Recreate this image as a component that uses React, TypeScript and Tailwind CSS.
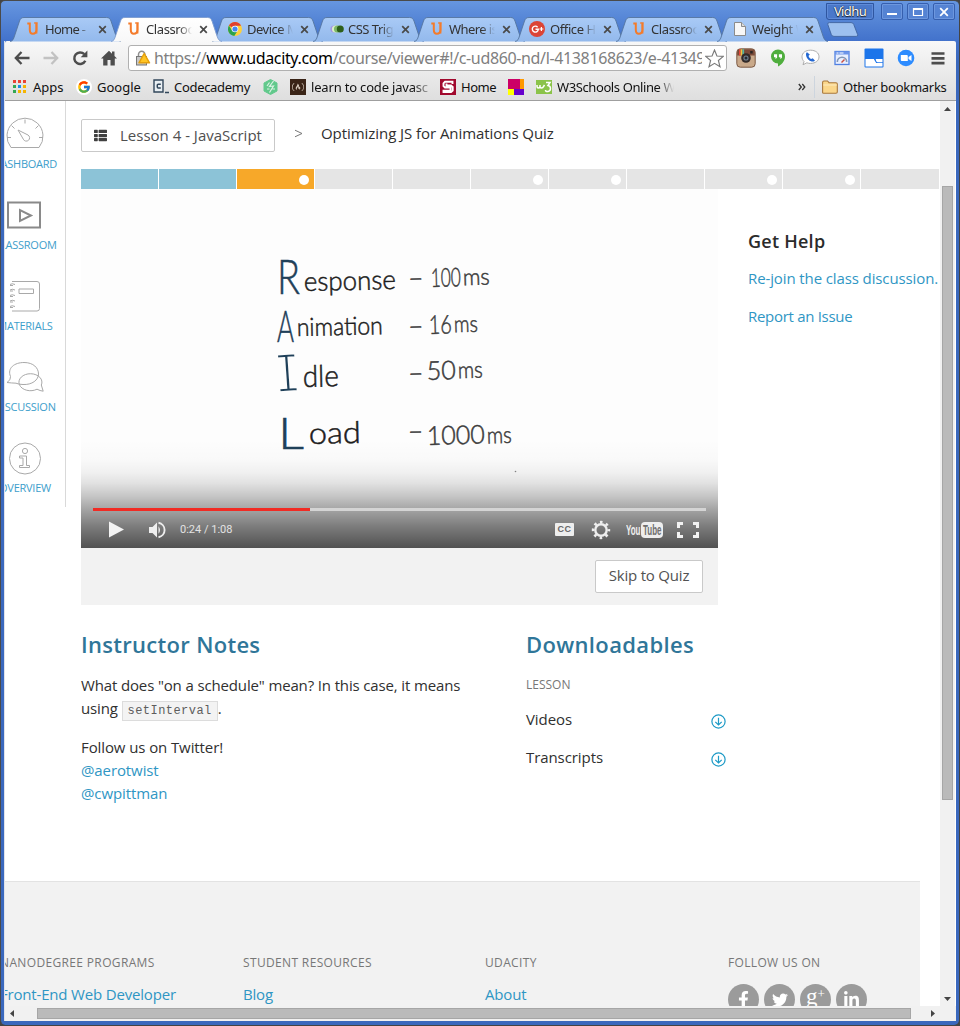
import type { ReactNode } from "react";
import { FaFacebookF, FaTwitter, FaLinkedinIn, FaThList, FaFreeCodeCamp } from "react-icons/fa";
import { FcGoogle } from "react-icons/fc";

const UI = "font-['Noto_Sans',sans-serif]";

function UdacityIcon() {
  return (
    <svg width="12" height="14" viewBox="0 0 12 14" fill="none" stroke="#f47b2a" strokeWidth="2">
      <path d="M.3 1.600h2.500v6.100c0 2.700 1.200 4 3 4s3.600-1.200 3.600-4V1.500" />
      <path d="M7.200 1h3.500M9.600 1.500v10" strokeWidth="1.600" />
    </svg>
  );
}

function ChromeIcon() {
  return (
    <svg width="14" height="14" viewBox="0 0 14 14">
      <circle cx="7" cy="7" r="7" fill="#fdd03b" />
      <path d="M7 7 .9 3.600A7 7 0 0 1 13.100 3.700H7Z" fill="#e0402f" />
      <path d="M.95 3.500A7 7 0 0 0 6.300 14L9.500 8.700 7 7 4 8.500Z" fill="#2ba24c" />
      <circle cx="7" cy="7" r="3.300" fill="#fff" />
      <circle cx="7" cy="7" r="2.600" fill="#4487f2" />
    </svg>
  );
}

function TriggersIcon() {
  return (
    <svg width="14" height="8" viewBox="0 0 14 8">
      <circle cx="4" cy="4" r="3.600" fill="#a793e2" />
      <circle cx="5.500" cy="4" r="3.600" fill="#d6f0c8" />
      <circle cx="7.500" cy="4" r="3.500" fill="#7db668" />
      <circle cx="10.300" cy="4" r="3.500" fill="#2d5f1a" />
    </svg>
  );
}

function GPlusIcon() {
  return (
    <svg width="16" height="16" viewBox="0 0 16 16">
      <circle cx="8" cy="8" r="8" fill="#dc4436" />
      <path d="M8.600 6.200A3 3 0 1 0 9.300 8.300H6.500" fill="none" stroke="#fff" strokeWidth="1.400" />
      <path d="M12.400 6v4M10.400 8h4" stroke="#fff" strokeWidth="1.200" />
    </svg>
  );
}

function PageIcon() {
  return (
    <svg width="12" height="14" viewBox="0 0 12 14">
      <path d="M.5.5H7.500L11.500 4.500V13.500H.5Z" fill="#f7f7f7" stroke="#8b8b8b" />
      <path d="M7.500.5V4.500H11.500" fill="#ddd" stroke="#8b8b8b" />
    </svg>
  );
}

const tabs: { title: string; icon: ReactNode; shift: string; track: string; active?: boolean }[] = [
  { title: "Home -", icon: <UdacityIcon />, shift: "", track: "tracking-[-0.7px]" },
  { title: "Classroom", icon: <UdacityIcon />, shift: "", track: "tracking-[-0.4px]", active: true },
  { title: "Device Mode", icon: <ChromeIcon />, shift: "-ml-px", track: "tracking-[-0.5px]" },
  { title: "CSS Triggers", icon: <TriggersIcon />, shift: "", track: "tracking-[-0.5px]" },
  { title: "Where is", icon: <UdacityIcon />, shift: "", track: "tracking-[-0.6px]" },
  { title: "Office Hours", icon: <GPlusIcon />, shift: "-ml-[3px]", track: "tracking-[-0.4px]" },
  { title: "Classroom", icon: <UdacityIcon />, shift: "", track: "tracking-[-0.4px]" },
  { title: "Weight Watch", icon: <PageIcon />, shift: "", track: "tracking-[-0.4px]" },
];

function TabShape({ active }: { active?: boolean }) {
  return (
    <svg className="absolute left-0 top-0" width="112" height="25" viewBox="0 0 112 25">
      <defs>
        <linearGradient id="tabBlue" x1="0" y1="0" x2="0" y2="1">
          <stop offset="0" stopColor="#a9caf6" />
          <stop offset="1" stopColor="#93b9ec" />
        </linearGradient>
        <linearGradient id="tabWhite" x1="0" y1="0" x2="0" y2="1">
          <stop offset="0" stopColor="#ffffff" />
          <stop offset="1" stopColor="#f8f8f8" />
        </linearGradient>
      </defs>
      <path
        d="M0 24.500C3 24 3.500 22 4.500 19L9.500 4C10.500 1.500 11.500.5 14 .5H96.500C99 .5 100 1.500 101 4L106 19C107 22 108 24 111 24.500"
        fill={active ? "url(#tabWhite)" : "url(#tabBlue)"}
        stroke={active ? "#7d9ccf" : "#55759f"}
        strokeWidth="0.900"
      />
    </svg>
  );
}

function TabStrip() {
  return (
    <div className="flex h-[24px] pl-[5px]">
      {tabs.map((t, i) => (
        <div key={i} className={t.active ? "relative z-10 h-[25px] w-[101px]" : "relative h-[24px] w-[101px]"}>
          <TabShape active={t.active} />
          <div className="relative flex h-[24px] items-center pl-[17px]">
            <div className={"flex w-[18px] shrink-0 items-center " + t.shift}>{t.icon}</div>
            <div
              className={
                "w-[46px] shrink-0 overflow-hidden whitespace-nowrap text-[13px] leading-[20px] text-[#333] [mask-image:linear-gradient(to_right,#000_72%,transparent_100%)] " +
                t.track + (t.shift === "-ml-[3px]" ? " ml-[3px]" : t.shift ? " ml-px" : "")
              }
            >
              {t.title}
            </div>
            <svg className="ml-[7px] shrink-0" width="9" height="9" viewBox="0 0 9 9" stroke="#4a4a4a" strokeWidth="1.700">
              <path d="M1.200 1.200 7.800 7.800M7.800 1.200 1.200 7.800" />
            </svg>
          </div>
        </div>
      ))}
      <svg className="ml-[9px] mt-[5px]" width="32" height="16" viewBox="0 0 32 16">
        <path d="M.8 2.500Q.3.600 2.300.600H24Q26 .6 26.700 2.300L30.600 12.500Q31.200 14.400 29.200 14.400H7Q5 14.400 4.300 12.500Z" fill="#9dc0ef" stroke="#40639e" strokeWidth="0.900" />
      </svg>
    </div>
  );
}

function WinButton({ children }: { children: ReactNode }) {
  return (
    <div className="flex h-[17px] w-[22px] items-center justify-center rounded-[2px] border border-[#365fae] bg-[#5583d3] shadow-[inset_0_0_0_1px_#6d97de]">
      {children}
    </div>
  );
}

function WindowControls() {
  return (
    <div className="absolute right-[4px] top-[2px] z-20 flex">
      <div className="mr-[7px] flex h-[17px] w-[48px] items-center justify-center rounded-b-[3px] border border-[#2f56a0] bg-[#4a78ca] text-[13px] leading-[15px] tracking-[-0.6px] text-white shadow-[inset_0_0_0_1px_#5f8bd8] [text-shadow:0_0_1px_#000,0_1px_1px_#222]">
        Vidhu
      </div>
      <div className="flex gap-[4px]">
        <WinButton>
          <svg width="12" height="10" viewBox="0 0 12 10"><path d="M1 7h10" stroke="#fff" strokeWidth="2" /></svg>
        </WinButton>
        <WinButton>
          <svg width="12" height="10" viewBox="0 0 12 10"><path d="M1.500 1.500h9v7h-9zM1.500 2.500h9" stroke="#fff" fill="none" strokeWidth="1.200" /></svg>
        </WinButton>
        <WinButton>
          <svg width="10" height="10" viewBox="0 0 10 10"><path d="M1.200 1.200 8.800 8.800M8.800 1.200 1.200 8.800" stroke="#fff" strokeWidth="1.800" /></svg>
        </WinButton>
      </div>
    </div>
  );
}

function Toolbar() {
  return (
    <div className="flex h-[34px] items-center pl-[9px]">
      <svg width="16" height="14" viewBox="0 0 16 14" fill="none" stroke="#4d4d4d" strokeWidth="2.300"><path d="M7.500 1 1.800 7l5.700 6M1.800 7H15.500" /></svg>
      <svg className="ml-[13px]" width="16" height="14" viewBox="0 0 16 14" fill="none" stroke="#c2c2c2" strokeWidth="2.300"><path d="M8.500 1 14.200 7l-5.700 6M14.200 7H.5" /></svg>
      <svg className="ml-[13px]" width="16" height="16" viewBox="0 0 16 16"><path d="M12.300 4.200A5.800 5.800 0 1 0 13.300 10.800" fill="none" stroke="#4d4d4d" strokeWidth="2.500" /><path d="M15.400.5V7.200H8.700Z" fill="#4d4d4d" /></svg>
      <svg className="ml-[13px]" width="16" height="16" viewBox="0 0 16 16" fill="#4d4d4d"><path d="M8 .8 0 8.600H2.200V15.400H6.500V10H9.500V15.400H13.800V8.600H16L13.500 6.100V1.500H11V3.700Z" /></svg>
      <div className="ml-[11px] flex h-[26px] w-[599px] items-center rounded-[3px] border border-[#b0b0b0] bg-white pl-[6px]">
        <svg width="16" height="16" viewBox="0 0 16 16">
          <path d="M3.500 7V4.500a3.200 3.200 0 0 1 6.400 0V7" fill="none" stroke="#8f8f8f" strokeWidth="1.500" />
          <rect x="1.500" y="6.500" width="10" height="8.500" fill="#c8c8c8" stroke="#777" />
          <path d="M9.200 3.500 14.500 12.800H4Z" fill="#ffc524" stroke="#e5a00c" strokeLinejoin="round" strokeWidth="1.500" />
        </svg>
        <div className="ml-[3px] w-[548px] overflow-hidden whitespace-nowrap text-[16px] leading-[24px] tracking-[-0.36px] text-[#808080]">
          https://<span className="text-black">www.udacity.com</span>/course/viewer#!/c-ud860-nd/l-4138168623/e-41349
        </div>
        <svg className="ml-[3px]" width="19" height="19" viewBox="0 0 18 18" fill="#fff" stroke="#7b7b7b" strokeWidth="1.100"><path d="m9 1 2.300 5.600 6 .4-4.600 3.900 1.500 5.900L9 13.600l-5.200 3.200 1.500-5.900L.7 7l6-.4Z" /></svg>
      </div>
      <div className="ml-[9px] flex gap-[12px]">
        <svg width="20" height="20" viewBox="0 0 20 20">
          <rect x=".8" y=".8" width="18.400" height="18.400" rx="3.500" fill="#c9a98a" stroke="#7c5a45" />
          <path d="M1.200 7.500V4.300Q1.200 1.200 4.300 1.200H15.700Q18.800 1.200 18.800 4.300V7.500Z" fill="#7b4a38" />
          <path d="M3 1.300h1.700v6.200H3z" fill="#e3493c" /><path d="M4.700 1.200h1.700v6.300H4.700z" fill="#f3c23c" /><path d="M6.400 1.200h1.700v6.300H6.400z" fill="#58b7a0" />
          <circle cx="10" cy="10" r="4.800" fill="#322a28" /><circle cx="10" cy="10" r="2.600" fill="#70808f" /><circle cx="10" cy="10" r="1.500" fill="#252b33" />
          <rect x="14.200" y="3" width="2.500" height="2.500" fill="#2b2523" />
        </svg>
        <svg width="20" height="20" viewBox="0 0 20 20">
          <path d="M10 1.500a7 7 0 0 1 7 7c0 4.500-3.200 8-7 10V15.500a7 7 0 0 1 0-14Z" fill="#4fae3d" />
          <path d="M6 6.300h3.100V9.500L7.500 11.300V9.200H6zM10.900 6.300H14V9.500l-1.600 1.800V9.200h-1.500z" fill="#fff" />
        </svg>
        <svg width="20" height="20" viewBox="0 0 20 20">
          <path d="M10.500 2.200c5 0 8.500 2.700 8.500 6.600s-3.500 6.600-8.500 6.600c-1.300 0-2.600-.2-3.700-.6L3 16.800l1-3.400C2.700 12.200 2 10.600 2 8.800c0-3.900 3.500-6.600 8.500-6.600Z" fill="#fff" stroke="#adadad" />
          <path d="M7 4.200c-1.800.8-1 5 1.200 7.200s5.800 2.800 6.700 1l-2.200-2.200-1.500.8c-1.300-.3-2.600-2-2.600-3.300L9.800 6.500Z" fill="#2468d2" />
        </svg>
        <svg width="20" height="20" viewBox="0 0 20 20">
          <rect x="3" y="3.500" width="14" height="13" fill="#e8efff" stroke="#5080e2" strokeWidth="1.300" />
          <path d="M3 3.500h14v3H3z" fill="#6d95e9" /><path d="M4.500 5h2M7.500 5h4" stroke="#fff" />
          <path d="M5.300 14a4.700 4.700 0 0 1 9.400 0" fill="none" stroke="#8396b5" strokeWidth="1.600" />
          <path d="m9.500 14.500 3-3" stroke="#cc4d40" strokeWidth="1.400" />
        </svg>
        <svg width="20" height="20" viewBox="0 0 20 20">
          <rect x=".5" y=".5" width="19" height="19" rx="1" fill="#1c75ea" />
          <path d="M1.500 11h8.300l2.400 4h6.300v3.500h-17z" fill="#fff" /><path d="M11.700 11h6.800v3.300h-4.800q-1.500 0-2-3.300Z" fill="#fff" />
        </svg>
        <svg width="20" height="20" viewBox="0 0 20 20">
          <circle cx="10" cy="10" r="8.300" fill="#2d8cff" />
          <path d="M4.800 7h6q1 0 1 1v5h-6q-1 0-1-1ZM12.500 9l3-2v6l-3-2Z" fill="#fff" />
        </svg>
        <svg width="20" height="20" viewBox="0 0 20 20" stroke="#4d4d4d" strokeWidth="2.700"><path d="M3.500 5.500h13M3.500 10.300h13M3.500 15.100h13" /></svg>
      </div>
    </div>
  );
}

const appColors = [
  "bg-[#ea4335]", "bg-[#ea4335]", "bg-[#ea4335]",
  "bg-[#34a853]", "bg-[#1a8fe8]", "bg-[#f5b400]",
  "bg-[#34a853]", "bg-[#f5b400]", "bg-[#f5b400]",
];

function Bookmarks() {
  return (
    <div className="flex h-[26px] items-center border-b border-[#9f9f9f] pb-[2px] pl-[8px] text-[13px] leading-[20px] whitespace-nowrap text-[#111]">
      <div className="grid w-[13px] grid-cols-3 gap-[2px]">
        {appColors.map((c, i) => <div key={i} className={"size-[3px] " + c} />)}
      </div>
      <div className="ml-[7px] w-[43px]">Apps</div>
      <div className="flex size-[16px] items-center justify-center rounded-full bg-white"><FcGoogle size={14} /></div>
      <div className="ml-[5px] w-[56px]">Google</div>
      <svg width="16" height="15" viewBox="0 0 16 15" fill="none" stroke="#32475b">
        <path d="M1 1h9v12H1z" strokeWidth="1.400" fill="#e9eff3" /><path d="M7.800 5.200H5.200q-.9 0-.9.900v2q0 .9.900.9H7.800" strokeWidth="1.500" /><path d="M12 13.500h4" strokeWidth="1.300" />
      </svg>
      <div className="ml-[5px] w-[89px] tracking-[-0.31px]">Codecademy</div>
      <svg width="15" height="16" viewBox="0 0 15 16"><path d="M7.500.5 14 4v8l-6.500 3.500L1 12V4Z" fill="#62c98c" stroke="#62c98c" strokeLinejoin="round" /><path d="m10.500 2-4 5.500 4-.5-4 6.500M6.500 3.500 4 7M9.500 10h2.500M4 10h2.500" stroke="#dcf2e4" strokeWidth="1.200" fill="none" /></svg>
      <div className="ml-[12px] flex size-[16px] items-center justify-center bg-[#3a2417] text-[#d9cdbf]"><FaFreeCodeCamp size={12} /></div>
      <div className="ml-[5px] w-[129px] tracking-[-0.18px]">
        <div className="w-[118px] overflow-hidden [mask-image:linear-gradient(to_right,#000_86%,#0004)]">learn to code javascript</div>
      </div>
      <svg width="16" height="16" viewBox="0 0 16 16"><rect width="16" height="16" fill="#a1092e" /><path d="M12.500 5V2.800H5L3.500 4.300V7L5 8.500h5.500v3.300H3.500V13H11l1.700-1.500V8L11 6.500H6.500V4.500" fill="none" stroke="#fff" strokeWidth="1.900" /></svg>
      <div className="ml-[5px] w-[47px] tracking-[-0.45px]">Home</div>
      <svg width="16" height="16" viewBox="0 0 16 16" shapeRendering="crispEdges"><path d="M0 0h12v10H0z" fill="#cc0066" /><path d="M12 0h4v10h-4z" fill="#ff9900" /><path d="M0 10h6v6H0z" fill="#ffff00" /><path d="M6 10h10v6H6z" fill="#6600cc" /></svg>
      <div className="ml-[12px] flex h-[14px] w-[16px] items-center justify-center bg-[#8bc34a]">
        <svg width="16" height="14" viewBox="0 0 16 14" fill="none" stroke="#fff" strokeWidth="1.500"><path d="M1 5v1.500q0 1.500 1.300 1.500T4 6.500V5M4 6.500Q4 8 5.500 8T7.500 6.500L8.500 5M10 2.500h4L12 5.500q2.500.3 2.500 3T12 11.500t-2.500-1.500" /></svg>
      </div>
      <div className="ml-[5px] w-[241px] tracking-[-0.4px]">
        <div className="w-[117px] overflow-hidden [mask-image:linear-gradient(to_right,#000_86%,transparent)]">W3Schools Online Web</div>
      </div>
      <svg width="8" height="8" viewBox="0 0 8 8" fill="none" stroke="#333" strokeWidth="1.300"><path d="m.8 1 2.500 3L.8 7M4.300 1l2.500 3-2.500 3" /></svg>
      <div className="ml-[8px] h-[22px] w-px bg-[#cdd5de]" />
      <svg className="ml-[7px]" width="16" height="14" viewBox="0 0 16 14"><path d="M.6 12.500V2.400Q.6 1 2 1H5.500L7 2.700H14Q15.300 2.700 15.300 4V12Q15.300 13.200 14 13.200H1.500Q.6 13.200.6 12.500Z" fill="#fbd78b" stroke="#a9783c" strokeWidth="1.100" /><path d="M1.200 5h13.600" stroke="#fdebc0" /></svg>
      <div className="ml-[5px] tracking-[-0.27px]">Other bookmarks</div>
    </div>
  );
}

const sideItems: { label: string; icon: ReactNode }[] = [
  {
    label: "DASHBOARD",
    icon: <path d="M6 31.500A18 18 0 1 1 34 31.500ZM20 3.500v4M6.500 9.500l3 3M33.500 9.500l-3 3M2 21.500h4M34 21.500h4M13 14l10 5a3.300 3.300 0 1 1-4.700 4.200Z" />,
  },
  { label: "CLASSROOM", icon: <path d="M3 5.500h32v25H3zM15 13v11l11-5.500Z" stroke="#8a8a8a" strokeWidth="2" /> },
  {
    label: "MATERIALS",
    icon: <path d="M7 3.500H32Q34.500 3.500 34.500 6V30.500Q34.500 33 32 33H7M14 11h14.500v4.500H14ZM5 6.500q2-1.500 5 0M5 12q2-1.500 5 0M5 17.500q2-1.500 5 0M5 23q2-1.500 5 0M5 28.500q2-1.500 5 0M5 7.500h3M5 13h3M5 18.500h3M5 24h3M5 29.500h3" />,
  },
  {
    label: "DISCUSSION",
    icon: <><path d="M5.500 17.500C2 9 9.500 3.500 19 3.500S33.500 9 33.500 15 27 26 18 25.500Q14 25.500 11 24.200 6.500 24 2 23.500 6 21 5.500 17.500Z" /><path d="M32 30.200A11.500 8.500 0 1 1 36.300 26L38.200 32.200Q35 31.800 32 30.200Z" /></>,
  },
  { label: "OVERVIEW", icon: <><circle cx="20" cy="18.500" r="15.500" /><circle cx="20" cy="11" r="2.600" /><path d="M14.500 16H21.500V25.500H24.500V27.500H14.500V25.500H18V18H14.500Z" /></> },
];

function Sidebar() {
  return (
    <div className="h-[406px] w-[61px] overflow-hidden border-r border-[#d9d9d9] pt-[15px]">
      {sideItems.map((s) => (
        <div key={s.label} className="-ml-[21px] flex h-[81px] w-[82px] flex-col items-center">
          <svg width="40" height="38" viewBox="0 0 40 38" fill="none" stroke="#a9a9a9" strokeWidth="1">{s.icon}</svg>
          <div className="mt-[3px] text-[11px] leading-[14px] tracking-[-0.26px] text-[#3d9ecb]">{s.label}</div>
        </div>
      ))}
    </div>
  );
}

const segments = ["done", "done", "current", "todo", "todo", "dot", "dot", "todo", "dot", "dot", "todo"];
const segmentColor: Record<string, string> = {
  done: "bg-[#8cc3d7]",
  current: "bg-[#f7a829]",
  todo: "bg-[#e5e5e5]",
  dot: "bg-[#e5e5e5]",
};

const rows = [
  { cap: "R", cx: 277, cy: 294, cs: 48, cw: 23, rest: "esponse", rx: 304, ry: 291, rs: 27, rw: 92, dy: 282, num: "100", nx: 431, ny: 287, nw: 30, mx: 463, my: 286, mw: 27 },
  { cap: "A", cx: 277, cy: 342, cs: 44, cw: 17, rest: "nimation", rx: 297, ry: 336, rs: 25, rw: 86, dy: 330, num: "16", nx: 429, ny: 334, nw: 23, mx: 454, my: 333, mw: 24 },
  { cap: "I", cx: 274, cy: 392, cs: 58, cw: 27, rest: "dle", rx: 303, ry: 387, rs: 30, rw: 36, dy: 377, num: "50", nx: 427, ny: 380, nw: 29, mx: 458, my: 379, mw: 25 },
  { cap: "L", cx: 278, cy: 449, cs: 43, cw: 26, rest: "oad", rx: 309, ry: 444, rs: 30, rw: 52, dy: 435, num: "1000", nx: 427, ny: 445, nw: 58, mx: 487, my: 445, mw: 25 },
];

function Slide() {
  return (
    <svg className="absolute left-0 top-0 font-['Lato',sans-serif]" width="637" height="359" viewBox="81 189 637 359">
      {rows.map((r) => (
        <g key={r.cap}>
          {r.cap === "I" ? (
            <text x={r.cx} y={r.cy} fontSize={r.cs} textLength={r.cw} lengthAdjust="spacingAndGlyphs" fill="#1f4059" stroke="#fdfdfd" strokeWidth="2.400" transform="rotate(-4 287 374)" className="font-['Liberation_Mono',monospace]">{r.cap}</text>
          ) : (
            <text x={r.cx} y={r.cy} fontSize={r.cs} textLength={r.cw} lengthAdjust="spacingAndGlyphs" fill="#1f4059" stroke="#1f4059" strokeWidth="0.500" fontWeight="300">{r.cap}</text>
          )}
          <text x={r.rx} y={r.ry} fontSize={r.rs} textLength={r.rw} lengthAdjust="spacingAndGlyphs" fill="#1c1c1c" stroke="#1c1c1c" strokeWidth="0.500" fontWeight="300" transform={`rotate(-1.200 ${r.rx} ${r.ry})`}>{r.rest}</text>
          <g transform={`rotate(-1.500 ${r.nx} ${r.ny})`} fill="#3c3c3c" stroke="#3c3c3c" strokeWidth="0.500" fontWeight="300">
            <text x="408" y={r.dy + 4} fontSize="24" textLength="16" lengthAdjust="spacingAndGlyphs">-</text>
            <text x={r.nx} y={r.ny} fontSize="26" textLength={r.nw} lengthAdjust="spacingAndGlyphs">{r.num}</text>
            <text x={r.mx} y={r.my} fontSize="23" textLength={r.mw} lengthAdjust="spacingAndGlyphs">ms</text>
          </g>
        </g>
      ))}
      <circle cx="515.500" cy="471.500" r=".8" fill="#888" />
    </svg>
  );
}

function Video() {
  return (
    <div className="relative flex h-[359px] w-[637px] flex-col justify-end bg-[#fdfdfd]">
      <Slide />
      <div className="relative h-[108px] bg-[linear-gradient(to_bottom,rgba(0,0,0,0)_0%,rgba(0,0,0,0.015)_18%,rgba(0,0,0,0.05)_30%,rgba(0,0,0,0.11)_40%,rgba(0,0,0,0.22)_52%,rgba(0,0,0,0.35)_64%,rgba(0,0,0,0.51)_80%,rgba(0,0,0,0.68)_100%)] px-[12px] pt-[68px]">
        <div className="h-[3px] bg-[#d4d4d4]"><div className="h-[3px] w-[217px] bg-[#f12b24]" /></div>
        <div className="flex h-[37px] items-center">
          <svg className="ml-[15px]" width="17" height="17" viewBox="0 0 17 17"><path d="M1 .5 16 8.500 1 16.500Z" fill="#f3f3f3" /></svg>
          <svg className="ml-[23px]" width="18" height="18" viewBox="0 0 18 18"><path d="M1 6h3.500L9 1.500v15L4.500 12H1Z" fill="#eee" /><path d="M10.500 5.200q3 3.800 0 7.600Z" fill="#eee" /><path d="M10.500 1.800a7.300 7.300 0 0 1 0 14.400" fill="none" stroke="#eee" strokeWidth="1.900" /></svg>
          <div className="ml-[14px] w-[376px] font-['Roboto',sans-serif] text-[11px] leading-[14px] text-[#e3e3e3]">0:24 / 1:08</div>
          <div className="-ml-px flex h-[13px] w-[19px] items-center justify-center rounded-[1px] bg-[#eee] font-['Liberation_Sans',sans-serif] text-[9px] leading-[13px] font-bold tracking-[0.5px] text-[#666]">CC</div>
          <svg className="ml-[17px]" width="20" height="20" viewBox="0 0 20 20" fill="none" stroke="#eee"><circle cx="10" cy="10" r="5.700" strokeWidth="2.400" /><circle cx="10" cy="10" r="7.900" strokeWidth="2.600" strokeDasharray="2.600 3.605" strokeDashoffset="1.300" /></svg>
          <div className="ml-[15px] flex h-[18px] w-[38px] items-center">
            <svg width="38" height="18" viewBox="0 0 38 18" className="font-['Liberation_Sans',sans-serif]">
              <text x="0" y="14" fontSize="14" fontWeight="700" textLength="14.500" lengthAdjust="spacingAndGlyphs" fill="#eee">You</text>
              <rect x="15" y="1" width="22" height="16" rx="4" fill="#eee" />
              <text x="17" y="14" fontSize="14" fontWeight="700" textLength="18.500" lengthAdjust="spacingAndGlyphs" fill="#6f6f6f">Tube</text>
            </svg>
          </div>
          <svg className="ml-[12px]" width="24" height="18" viewBox="0 0 24 18" fill="none" stroke="#f2f2f2" strokeWidth="3"><path d="M2.500 7V2.500H7M17 2.500h4.500V7M21.500 11v4.500H17M7 15.500H2.500V11" /></svg>
        </div>
      </div>
    </div>
  );
}

function DownloadRow({ label }: { label: string }) {
  return (
    <div className="flex h-[38px] w-[200px] items-center justify-between text-[15px] tracking-[-0.08px] text-[#303030]">
      <span>{label}</span>
      <svg className="mt-[4px]" width="15" height="15" viewBox="0 0 15 15" fill="none" stroke="#1d9ac6" strokeWidth="1.200"><circle cx="7.500" cy="7.500" r="6.600" /><path d="M7.500 3.800v7M4.300 7.800l3.200 3.200 3.200-3.200" /></svg>
    </div>
  );
}

const link = "text-[#2f96c4]";

function Main() {
  return (
    <div className="w-[859px] pt-[18px]">
      <div className="flex h-[33px] items-center">
        <div className="flex h-[33px] w-[194px] items-center rounded-[2px] border border-[#c9c9c9] pb-px pl-[12px] text-[15px] whitespace-nowrap text-[#4f4f4f]">
          <FaThList className="mt-px text-[#404040]" size={13} />
          <span className="ml-[13px]">Lesson 4 - JavaScript</span>
        </div>
        <svg className="ml-[19px] mt-[-5px]" width="9" height="9" viewBox="0 0 9 9" fill="none" stroke="#777"><path d="M1 1.200 8 4.500 1 7.800" /></svg>
        <div className="-mt-[5px] ml-[18px] text-[15px] tracking-[-0.06px] text-[#303030]">Optimizing JS for Animations Quiz</div>
      </div>
      <div className="mt-[17px] flex h-[20px] gap-px">
        {segments.map((s, i) => (
          <div key={i} className={"flex h-[20px] shrink-0 items-center justify-end pt-[2px] pr-[5px] " + (i === 10 ? "w-[78px] " : "w-[77px] ") + segmentColor[s]}>
            {(s === "dot" || s === "current") && <div className="size-[10px] rounded-full bg-white" />}
          </div>
        ))}
      </div>
      <div className="flex">
        <div className="w-[637px]">
          <Video />
          <div className="flex h-[57px] justify-end bg-[#f2f2f2] pt-[12px] pr-[15px]">
            <div className="flex h-[33px] w-[108px] items-center justify-center rounded-[2px] border border-[#c9c9c9] bg-white pb-[2px] text-[15px] tracking-[-0.2px] text-[#525252]">Skip to Quiz</div>
          </div>
        </div>
        <div className="ml-[30px] pt-[40px] text-[15px] leading-[22px] whitespace-nowrap">
          <h3 className="text-[18px] leading-[24px] font-semibold tracking-[0.25px] text-[#2b2b2b]">Get Help</h3>
          <div className={"mt-[14px] tracking-[-0.11px] " + link}>Re-join the class discussion.</div>
          <div className={"mt-[16px] tracking-[-0.3px] " + link}>Report an Issue</div>
        </div>
      </div>
      <div className="flex pt-[23px]">
        <div className="w-[445px]">
          <h2 className="text-[22px] leading-[32px] font-semibold tracking-[0.3px] text-[#2f7699]">Instructor Notes</h2>
          <p className="mt-[14px] text-[15px] leading-[23px] tracking-[-0.14px] text-[#303030]">
            What does "on a schedule" mean? In this case, it means<br />
            using <code className="border border-[#dcdcdc] bg-[#f3f3f3] px-[5px] py-[2px] font-['Liberation_Mono',monospace] text-[12px] tracking-[0.45px] text-[#5d5d5d]">setInterval</code>.
          </p>
          <p className="mt-[13px] text-[15px] leading-[23px] tracking-[-0.1px] text-[#303030]">
            Follow us on Twitter!<br />
            <span className={link}>@aerotwist</span><br />
            <span className={link}>@cwpittman</span>
          </p>
        </div>
        <div>
          <h2 className="text-[22px] leading-[32px] font-semibold tracking-[0.35px] text-[#2f7699]">Downloadables</h2>
          <div className="mt-[17px] mb-[7px] text-[12px] leading-[16px] text-[#777]">LESSON</div>
          <DownloadRow label="Videos" />
          <DownloadRow label="Transcripts" />
        </div>
      </div>
    </div>
  );
}

const footerCols = [
  { head: "NANODEGREE PROGRAMS", item: "Front-End Web Developer", pos: "-ml-[5px] w-[243px]" },
  { head: "STUDENT RESOURCES", item: "Blog", pos: "w-[242px]" },
  { head: "UDACITY", item: "About", pos: "w-[243px]" },
];

function Footer() {
  return (
    <div className="flex h-[125px] w-[915px] overflow-hidden border-t border-[#e3e3e3] bg-[#f2f2f2] pt-[73px] text-[15px] whitespace-nowrap">
      {footerCols.map((c) => (
        <div key={c.head} className={"shrink-0 " + c.pos}>
          <div className="text-[12px] leading-[16px] tracking-[0.35px] text-[#777]">{c.head}</div>
          <div className={"mt-[12px] leading-[22px] tracking-[-0.18px] " + link}>{c.item}</div>
        </div>
      ))}
      <div>
        <div className="text-[12px] leading-[16px] tracking-[0.34px] text-[#777]">FOLLOW US ON</div>
        <div className="mt-[13px] flex gap-[5px] text-white">
          <div className="flex size-[31px] items-center justify-center rounded-full bg-[#9b9b9b]"><FaFacebookF size={17} /></div>
          <div className="flex size-[31px] items-center justify-center rounded-full bg-[#9b9b9b]"><FaTwitter size={16} /></div>
          <div className="flex size-[31px] items-center justify-center rounded-full bg-[#9b9b9b] pb-[5px] font-['Liberation_Serif',serif] text-[23px] leading-[20px]">g<span className="-mt-[6px] text-[13px]">+</span></div>
          <div className="flex size-[31px] items-center justify-center rounded-full bg-[#9b9b9b]"><FaLinkedinIn size={17} /></div>
        </div>
      </div>
    </div>
  );
}

function VerticalScrollbar() {
  return (
    <div className="flex h-[905px] w-[15px] flex-col items-center bg-[#f1f1f1]">
      <svg className="mt-[6px]" width="7" height="4" viewBox="0 0 7 4"><path d="M3.500 0 7 4H0Z" fill="#444" /></svg>
      <div className="mt-[75px] h-[614px] w-[11px] border border-[#a6a6a6] bg-[#bababa]" />
      <svg className="mt-[197px]" width="7" height="4" viewBox="0 0 7 4"><path d="M0 0h7L3.500 4Z" fill="#444" /></svg>
    </div>
  );
}

function HorizontalScrollbar() {
  return (
    <div className="flex h-[15px] items-center bg-[#f1f1f1]">
      <svg className="ml-[5px]" width="4" height="7" viewBox="0 0 4 7"><path d="M4 0v7L0 3.500Z" fill="#444" /></svg>
      <div className="ml-[23px] h-[11px] w-[874px] border border-[#a6a6a6] bg-[#bababa]" />
      <svg className="ml-[20px]" width="4" height="7" viewBox="0 0 4 7"><path d="M0 0v7L4 3.500Z" fill="#444" /></svg>
    </div>
  );
}

export default function App() {
  return (
    <div className="h-[1026px] w-[960px] overflow-hidden bg-[#444]">
      <div className={"relative h-[1025px] w-[959px] overflow-hidden rounded-[5px] border-t border-l border-[#4a4a4a] bg-[linear-gradient(to_bottom,#6696e0_0px,#4272cb_40px,#3a68bd_60px,#3a68bd_100%)] " + UI}>
        <div className="ml-[4px] h-[40px] w-[950px] pt-[16px]"><TabStrip /></div>
        <WindowControls />
        <div className="ml-[3px] w-[952px] border-l border-[#dfe3ea]">
          <div className="rounded-t-[2px] bg-[linear-gradient(to_bottom,#f8f8f8,#dedede)]">
            <Toolbar />
            <Bookmarks />
          </div>
          <div className="flex h-[905px] bg-white font-['Open_Sans',sans-serif]">
            <div className="h-[905px] w-[935px] overflow-hidden">
              <div className="flex h-[780px]">
                <Sidebar />
                <div className="ml-[15px]"><Main /></div>
              </div>
              <Footer />
            </div>
            <VerticalScrollbar />
          </div>
          <HorizontalScrollbar />
        </div>
      </div>
    </div>
  );
}
